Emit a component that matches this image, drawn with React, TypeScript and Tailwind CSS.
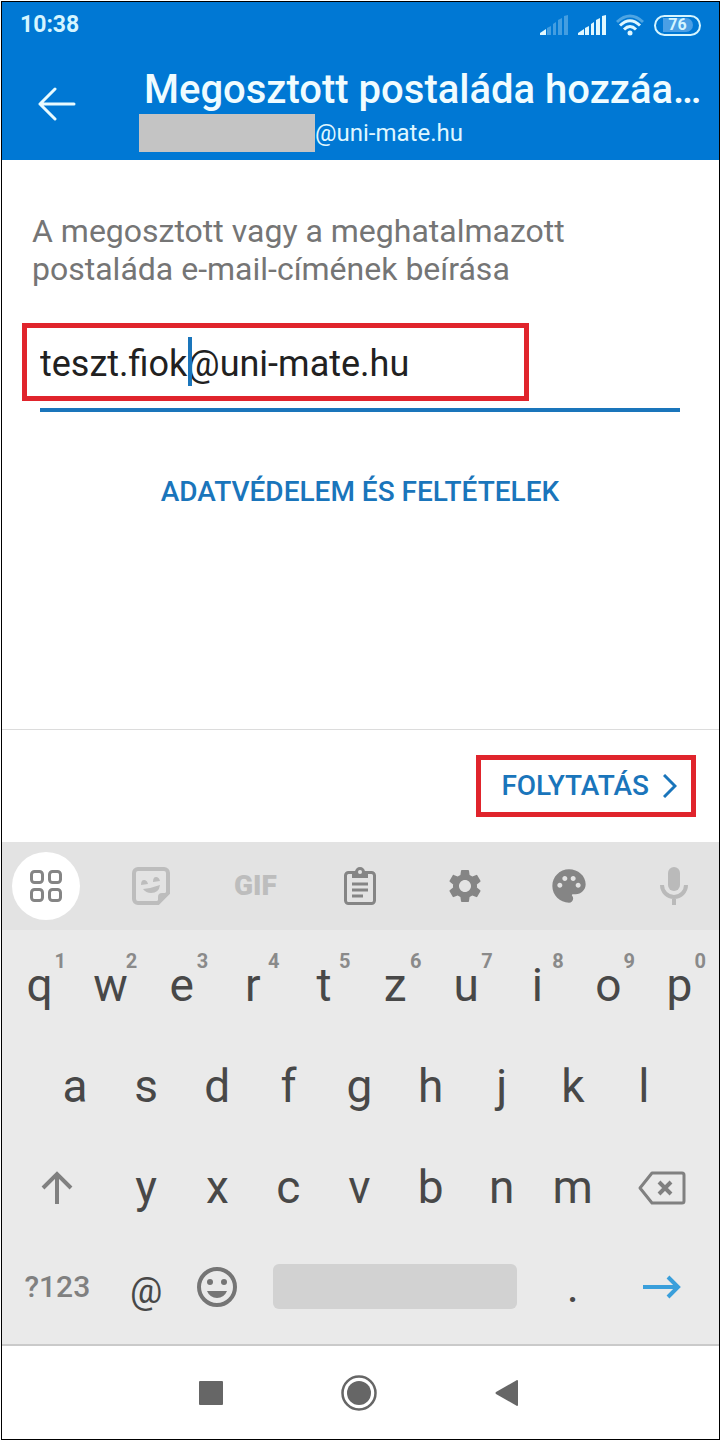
import type { ReactNode } from "react";
import { MdPalette, MdSettings } from "react-icons/md";

const numberRow = [
  ["q", "1"],
  ["w", "2"],
  ["e", "3"],
  ["r", "4"],
  ["t", "5"],
  ["z", "6"],
  ["u", "7"],
  ["i", "8"],
  ["o", "9"],
  ["p", "0"],
];
const homeRow = ["a", "s", "d", "f", "g", "h", "j", "k", "l"];
const bottomRow = ["y", "x", "c", "v", "b", "n", "m"];

const Signal = ({ level }: { level: number }) => (
  <svg width="28" height="20" viewBox="0 0 28 20" fill="#e0f8ff" aria-hidden="true">
    <path d="M0 20v-2l6-4v6z" />
    <path d="M7 20v-7l4-2v9z" opacity={level > 1 ? 1 : 0.3} />
    <path d="M13 20V9l3-2v13z" opacity={level > 1 ? 1 : 0.3} />
    <path d="M18 20V5l4-2v17z" opacity={level > 1 ? 1 : 0.3} />
    <path d="M24 20V1l4-1v20z" opacity={level > 1 ? 1 : 0.3} />
  </svg>
);

const Wifi = () => (
  <svg width="28" height="22" viewBox="0 0 28 22" fill="none" stroke="#e0f8ff" strokeWidth="3" aria-hidden="true">
    <path d="M1 8Q14-4 27 8" opacity="0.35" />
    <path d="M4 11.500Q14 2 24 11.500" />
    <path d="M8 15.500Q14 9.500 20 15.500" />
    <circle cx="14" cy="19" r="2.500" fill="#e0f8ff" stroke="none" />
  </svg>
);

const StatusBar = () => (
  <div className="flex h-[46px] items-center justify-between px-[18px] text-[#d5f5ff]">
    <span className="text-[23px] font-bold">10:38</span>
    <div className="flex items-center gap-[10px]">
      <Signal level={1} />
      <Signal level={5} />
      <Wifi />
      <span className="flex h-[21px] w-[47px] items-center justify-center rounded-full border-2 border-[#d5f5ff] p-px text-base font-bold leading-none">
        <span className="flex h-[14px] w-[30px] items-center justify-center rounded-r-full bg-[#4a9fe5]">76</span>
      </span>
    </div>
  </div>
);

const Header = () => (
  <header className="bg-[#0078d4] text-[#f0fcff]">
    <StatusBar />
    <div className="flex h-28 items-center pl-[34px] pr-[10px]">
      <button type="button" aria-label="Vissza" className="shrink-0">
        <svg width="40" height="34" viewBox="0 0 40 34" fill="none" stroke="#e8fbff" strokeWidth="3" strokeLinecap="round" strokeLinejoin="round">
          <path d="M19 2L4 17l15 15M4 17h34" />
        </svg>
      </button>
      <div className="ml-[63px] min-w-0 flex-1 pt-[10px]">
        <h1 className="whitespace-nowrap pl-[5px] text-[40px] font-medium leading-[48px]">Megosztott postaláda hozzáa…</h1>
        <div className="flex h-[38px] items-center text-2xl text-[#dff6ff]">
          <span className="h-[38px] w-44 bg-[#c4c4c4]" />
          <span>@uni-mate.hu</span>
        </div>
      </div>
    </div>
  </header>
);

const SharedMailboxForm = () => (
  <main className="flex flex-1 flex-col">
    <form className="flex flex-1 flex-col" onSubmit={(event) => event.preventDefault()}>
      <div className="flex flex-1 flex-col pl-[30px] pr-[31px] pt-[52px]">
        <label htmlFor="email" className="max-w-[580px] text-[32px] leading-[38px] text-[#757575]">
          A megosztott vagy a meghatalmazott postaláda e-mail-címének beírása
        </label>
        <div className="relative mx-2 mt-[35px] border-b-4 border-[#1a75bb] pb-[9px]">
          <input
            id="email"
            type="text"
            defaultValue="teszt.fiok@uni-mate.hu"
            className="block h-[76px] w-full bg-transparent pt-[6px] text-4xl text-[#212121] outline-none"
          />
          <span className="pointer-events-none absolute left-[148px] top-[14px] h-[49px] w-1 bg-[#1a75bb]" />
          <span className="pointer-events-none absolute -left-[18px] top-0 h-[78px] w-[507px] border-[5px] border-[#e0242c]" />
        </div>
        <a href="#privacy" className="mt-[60px] self-center text-[28px] font-medium leading-10 text-[#1a75bb]">
          ADATVÉDELEM ÉS FELTÉTELEK
        </a>
      </div>
      <div className="flex h-[113px] items-center justify-end border-t border-[#dcdcdc] pr-[23px]">
        <button
          type="submit"
          className="flex h-[62px] items-center gap-[14px] border-[5px] border-[#e0242c] pl-5 pr-[14px] text-[28px] font-medium text-[#1a75bb]"
        >
          FOLYTATÁS
          <svg width="14" height="24" viewBox="0 0 14 24" fill="none" stroke="currentColor" strokeWidth="3" aria-hidden="true">
            <path d="M1 1l11 11L1 23" />
          </svg>
        </button>
      </div>
    </form>
  </main>
);

const ToolButton = ({ label, className = "", children }: { label: string; className?: string; children: ReactNode }) => (
  <button type="button" aria-label={label} className={`flex size-[68px] items-center justify-center rounded-full ${className}`}>
    {children}
  </button>
);

const Toolbar = () => (
  <div className="flex h-[88px] items-center justify-between bg-[#e3e3e3] pl-[10px] pr-[11px] text-[#858585]">
    <ToolButton label="Menü" className="bg-white">
      <svg width="32" height="32" viewBox="0 0 32 32" fill="none" stroke="currentColor" strokeWidth="3">
        <rect x="1.500" y="1.500" width="11" height="11" rx="3" />
        <rect x="19.500" y="1.500" width="11" height="11" rx="3" />
        <rect x="1.500" y="19.500" width="11" height="11" rx="3" />
        <rect x="19.500" y="19.500" width="11" height="11" rx="3" />
      </svg>
    </ToolButton>
    <ToolButton label="Matricák" className="text-[#bdbdbd]">
      <svg width="38" height="38" viewBox="0 0 38 38" fill="none" stroke="currentColor" strokeWidth="4">
        <path d="M26 36H6a4 4 0 0 1-4-4V6a4 4 0 0 1 4-4h26a4 4 0 0 1 4 4v20z" />
        <path d="M26 36v-6q0-4 4-4h6z" fill="currentColor" stroke="none" />
        <path d="M11 22q9-1 17-4-1 8-9 8-5 0-8-4z" fill="currentColor" stroke="none" />
        <path d="M9 18q0-5 3-5 3 0 4 4zM21 15q0-5 3-5 3 0 4 4z" fill="currentColor" stroke="none" />
      </svg>
    </ToolButton>
    <ToolButton label="GIF" className="text-[#bdbdbd]">
      <span className="text-[28px] font-black leading-none">GIF</span>
    </ToolButton>
    <ToolButton label="Vágólap">
      <svg width="32" height="38" viewBox="0 0 32 38" fill="none" stroke="currentColor" strokeWidth="3">
        <rect x="1.500" y="5.500" width="29" height="31" rx="3" />
        <path d="M8 5h3a5 5 0 0 1 10 0h3v6H8z" fill="currentColor" stroke="none" />
        <circle cx="16" cy="5" r="2" fill="#e3e3e3" stroke="none" />
        <path d="M8 17h16M8 23h16M8 29h11" />
      </svg>
    </ToolButton>
    <ToolButton label="Beállítások">
      <MdSettings size={40} />
    </ToolButton>
    <ToolButton label="Téma">
      <MdPalette size={40} />
    </ToolButton>
    <ToolButton label="Hangbevitel" className="text-[#bababa]">
      <svg width="28" height="38" viewBox="0 0 28 38" fill="none" stroke="currentColor" strokeWidth="4">
        <rect x="8" y="0" width="12" height="24" rx="6" fill="currentColor" stroke="none" />
        <path d="M2 18a12 12 0 0 0 24 0M14 30v8" />
      </svg>
    </ToolButton>
  </div>
);

const Key = ({ letter, hint }: { letter: string; hint?: string }) => (
  <button type="button" className="relative col-span-2 flex h-full items-center justify-center">
    {letter}
    {hint && <span className="absolute right-[9px] top-[14px] text-xl font-bold leading-6 text-[#8a8a8a]">{hint}</span>}
  </button>
);

const Keyboard = () => (
  <section aria-label="Billentyűzet" className="bg-[#eaeaea]">
    <Toolbar />
    <div className="grid grid-cols-20 grid-rows-[101px_101px_101px_97px] pb-[9px] pl-[2px] pr-1 pt-[5px] text-[46px] text-[#484848]">
      {numberRow.map(([letter, hint]) => (
        <Key key={letter} letter={letter} hint={hint} />
      ))}

      <span />
      {homeRow.map((letter) => (
        <Key key={letter} letter={letter} />
      ))}
      <span />

      <button type="button" aria-label="Shift" className="col-span-3 flex items-center justify-center text-[#808080]">
        <svg width="32" height="34" viewBox="0 0 32 34" fill="none" stroke="currentColor" strokeWidth="4">
          <path d="M2 17L16 3l14 14M16 3v30" />
        </svg>
      </button>
      {bottomRow.map((letter) => (
        <Key key={letter} letter={letter} />
      ))}
      <button type="button" aria-label="Törlés" className="col-span-3 flex items-center justify-center text-[#808080]">
        <svg width="48" height="34" viewBox="0 0 48 34" fill="none" stroke="currentColor" strokeWidth="3" strokeLinejoin="round">
          <path d="M14 2h30a2 2 0 0 1 2 2v26a2 2 0 0 1-2 2H14L2 17z" />
          <path d="M21 11l12 12M33 11L21 23" strokeWidth="4" />
        </svg>
      </button>

      <button type="button" className="col-span-3 flex items-center justify-center text-[30px] font-medium text-[#808080]">
        ?123
      </button>
      <button type="button" className="col-span-2 flex items-center justify-center pt-2 text-4xl">
        @
      </button>
      <button type="button" aria-label="Emoji" className="col-span-2 flex items-center justify-center text-[#757575]">
        <svg width="40" height="40" viewBox="0 0 40 40" fill="currentColor">
          <circle cx="20" cy="20" r="18" fill="none" stroke="currentColor" strokeWidth="4" />
          <circle cx="13" cy="15" r="3" />
          <circle cx="27" cy="15" r="3" />
          <path d="M10 24h20q-3 7-10 7t-10-7z" />
        </svg>
      </button>
      <button type="button" aria-label="Szóköz" className="col-span-8 mx-5 h-[45px] self-center rounded-md bg-[#d2d2d2]" />
      <Key letter="." />
      <button type="button" aria-label="Tovább" className="col-span-3 flex items-center justify-center">
        <svg width="38" height="24" viewBox="0 0 38 24" fill="none" stroke="#3a9fdb" strokeWidth="4">
          <path d="M0 12h35M25 2l10 10-10 10" />
        </svg>
      </button>
    </div>
  </section>
);

const SystemBar = () => (
  <nav aria-label="Rendszer" className="flex h-[95px] items-center justify-center border-t-2 border-[#cacaca] bg-white pr-1 text-[#666666]">
    <button type="button" aria-label="Legutóbbiak" className="flex w-[148px] justify-center">
      <svg width="24" height="24" viewBox="0 0 24 24" fill="currentColor">
        <rect width="24" height="24" rx="1" />
      </svg>
    </button>
    <button type="button" aria-label="Kezdőlap" className="flex w-[148px] justify-center">
      <svg width="36" height="36" viewBox="0 0 36 36" fill="currentColor">
        <circle cx="18" cy="18" r="16.500" fill="none" stroke="currentColor" strokeWidth="2.500" />
        <circle cx="18" cy="18" r="12" />
      </svg>
    </button>
    <button type="button" aria-label="Vissza" className="flex w-[148px] justify-center">
      <svg width="24" height="26" viewBox="0 0 24 26" fill="currentColor">
        <path d="M1 12L22 0q1 0 1 1v24q0 1-1 1L1 14q-1-1 0-2z" />
      </svg>
    </button>
  </nav>
);

const App = () => {
  return (
    <div className="flex min-h-screen flex-col bg-white pl-px pt-px font-['Roboto',sans-serif]">
      <div className="flex flex-1 flex-col border border-black">
        <Header />
        <SharedMailboxForm />
        <Keyboard />
        <SystemBar />
      </div>
    </div>
  );
};

export default App;
